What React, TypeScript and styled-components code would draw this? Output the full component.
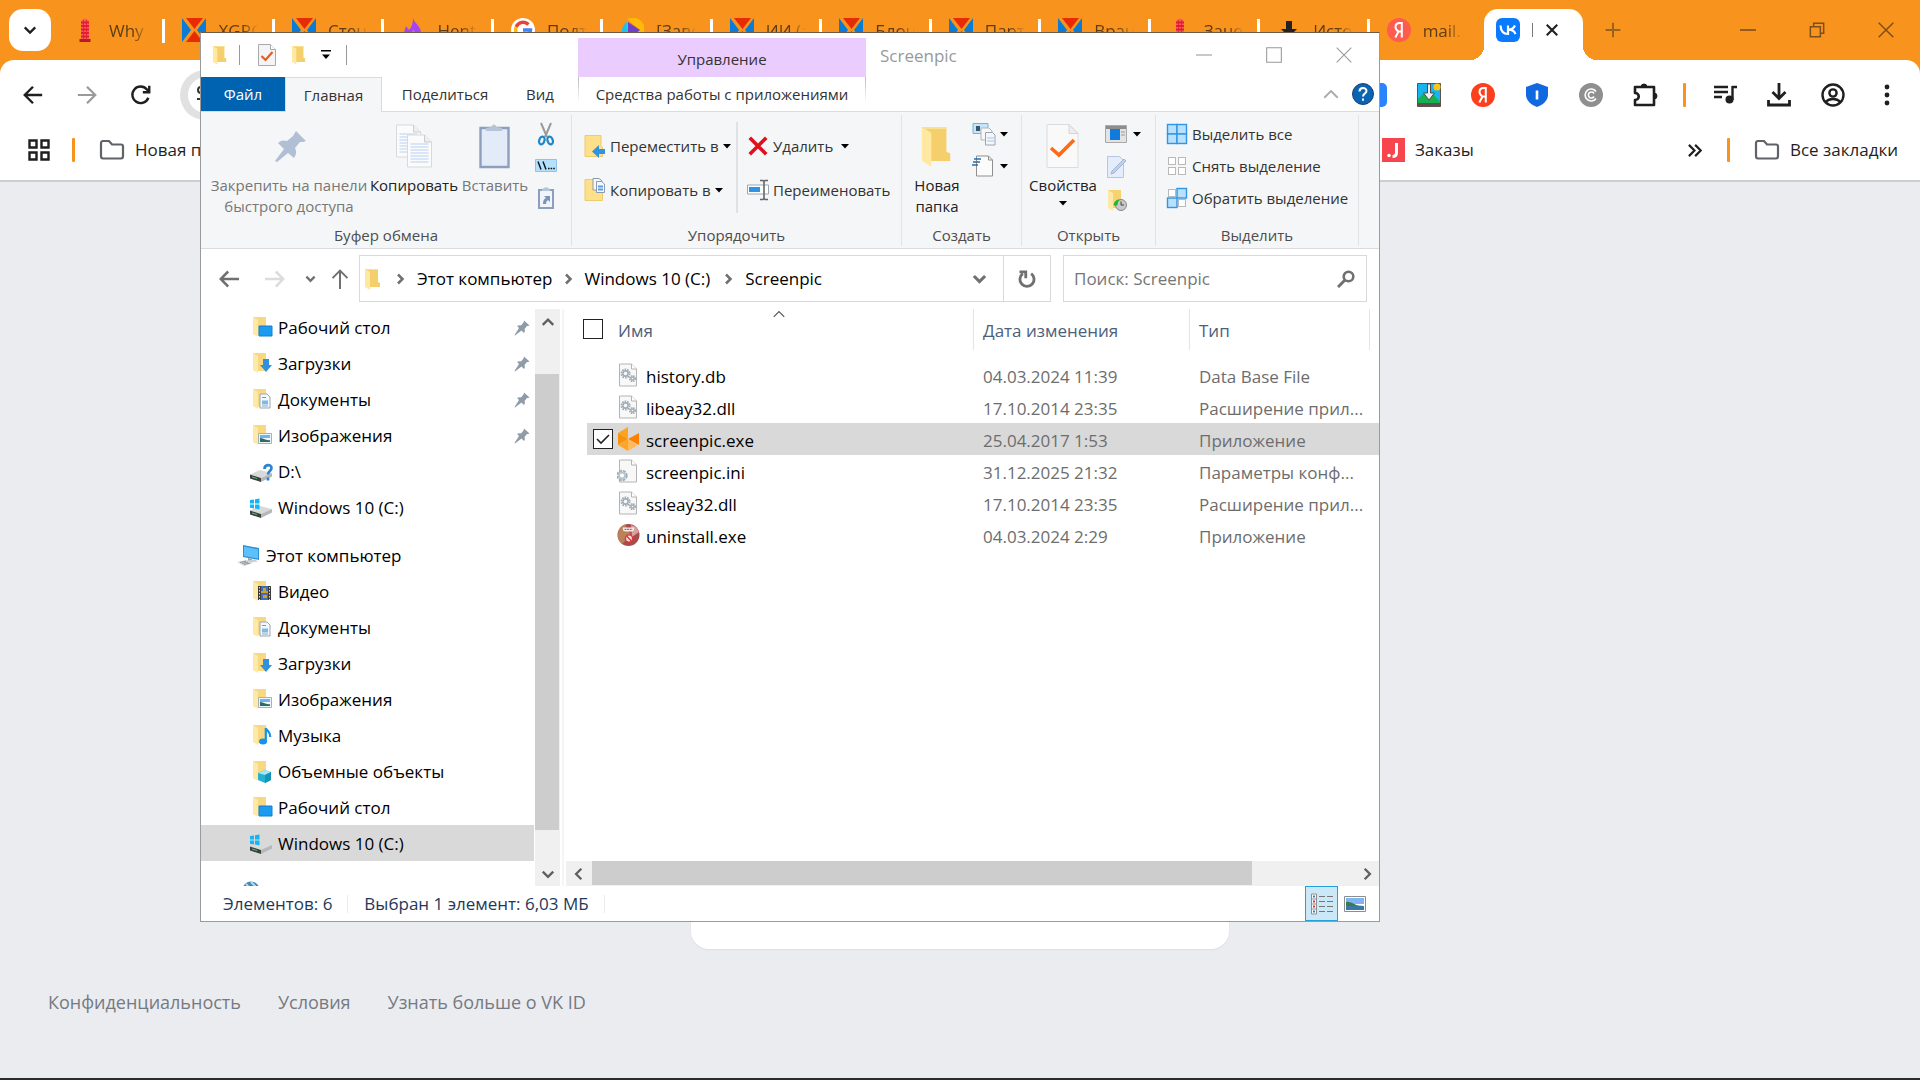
import React from "react";
import styled, { createGlobalStyle, css } from "styled-components";

const orange = "#f8931d";
const uiFont = `"Open Sans", "Noto Sans", sans-serif`;

const GlobalStyle = createGlobalStyle`
  * { box-sizing: border-box; }
  body { margin: 0; font-family: ${uiFont}; color: #1f1f1f; }
  button, input { font: inherit; color: inherit; }
  button { background: none; border: 0; padding: 0; margin: 0; }
  svg { display: block; flex: none; }
`;

/* ---------- browser ---------- */

const Page = styled.div`
  position: relative;
  display: flex;
  flex-direction: column;
  min-height: 100vh;
  background: #ebecf0;
  border-bottom: 2px solid #2b2b2b;
  overflow: hidden;
`;

const TabStrip = styled.header`
  display: flex;
  align-items: stretch;
  height: 60px;
  padding: 0 0 0 9px;
  background: ${orange};
`;

const TabSearch = styled.button`
  display: grid;
  place-items: center;
  align-self: center;
  width: 42px;
  height: 42px;
  border-radius: 14px;
  background: #fff;
`;

const Tabs = styled.nav`
  display: flex;
  flex: 1;
  margin-left: 5px;
`;

const Tab = styled.button<{ $last?: boolean }>`
  display: flex;
  align-items: center;
  gap: 12px;
  flex: 1 1 0;
  min-width: 0;
  height: 60px;
  padding-left: 17px;
  ${(p) =>
    !p.$last &&
    css`
      background: linear-gradient(#fff, #fff) right 19px / 3px 24px no-repeat;
    `}
`;

const TabTitle = styled.span`
  width: 40px;
  padding-top: 2px;
  overflow: hidden;
  white-space: nowrap;
  text-align: left;
  font-size: 17px;
  line-height: 24px;
  color: #5f3d14;
  mask-image: linear-gradient(to right, #000 60%, transparent);
`;

const ActiveTab = styled.button`
  display: flex;
  align-items: center;
  gap: 12px;
  position: relative;
  width: 99px;
  height: 51px;
  margin: 9px 12px 0 5px;
  padding: 0 14px 9px 12px;
  border-radius: 14px 14px 0 0;
  background: #fff;
  &::before,
  &::after {
    content: "";
    position: absolute;
    bottom: 0;
    width: 14px;
    height: 14px;
  }
  &::before {
    right: 100%;
    background: radial-gradient(circle at 0 0, transparent 14px, #fff 14px);
  }
  &::after {
    left: 100%;
    background: radial-gradient(circle at 100% 0, transparent 14px, #fff 14px);
  }
`;

const TabEdge = styled.span`
  width: 1px;
  height: 14px;
  background: #777;
`;

const NewTab = styled.button`
  display: grid;
  place-items: center;
  width: 36px;
`;

const WindowButtons = styled.div`
  display: flex;
  margin-left: 82px;
`;

const WindowButton = styled.button`
  display: grid;
  place-items: center;
  width: 69px;
`;

const ToolbarBack = styled.div`
  background: ${orange};
`;

const Toolbar = styled.div`
  display: flex;
  align-items: center;
  height: 69px;
  padding: 0 6px;
  background: #fff;
  border-radius: 14px 14px 0 0;
`;

const ToolButton = styled.button`
  display: grid;
  place-items: center;
  width: 54px;
  height: 50px;
`;

const Omnibox = styled.div`
  display: flex;
  align-items: center;
  flex: 1;
  height: 50px;
  margin-left: 12px;
  padding-left: 8px;
  border-radius: 25px;
  background: linear-gradient(to right, #e1e1e1 400px, #fff 400px);
`;

const SiteInfo = styled.button`
  display: grid;
  place-items: center;
  width: 36px;
  height: 36px;
  border-radius: 18px;
  background: #fff;
`;

const Divider = styled.span<{ $m: string }>`
  width: 3px;
  height: 24px;
  margin: ${(p) => p.$m};
  background: ${orange};
  border-radius: 1px;
`;

const Bookmarks = styled.nav`
  display: flex;
  align-items: center;
  height: 53px;
  padding: 0 22px 9px 27px;
  background: #fff;
  border-bottom: 2px solid #cdced2;
`;

const Bookmark = styled.a`
  display: flex;
  align-items: center;
  gap: 10px;
  font-size: 17px;
  line-height: 24px;
  color: #1f1f1f;
  text-decoration: none;
  white-space: nowrap;
`;

const Push = styled.span`
  flex: 1;
`;

const OrdersSlot = styled.div`
  width: 305px;
`;

const Main = styled.main`
  display: flex;
  flex: 1;
  justify-content: center;
  align-items: flex-end;
`;

const LoginCard = styled.section`
  width: 538px;
  height: 640px;
  border-radius: 18px;
  background: #fff;
  box-shadow: 0 1px 2px rgba(0, 0, 0, 0.06);
`;

const Footer = styled.footer`
  display: flex;
  gap: 37px;
  height: 129px;
  padding: 40px 48px 0;
  font-size: 18px;
  line-height: 26px;
  a {
    color: #747a83;
    text-decoration: none;
  }
`;

/* ---------- explorer window ---------- */

const Explorer = styled.section`
  position: absolute;
  left: 200px;
  top: 32px;
  display: flex;
  flex-direction: column;
  width: 1180px;
  height: 890px;
  border: 1px solid #9a9a9f;
  border-top-color: #6b5a45;
  background: #fff;
  color: #000;
`;

const TitleBar = styled.div`
  display: flex;
  height: 44px;
`;

const QuickAccess = styled.div`
  display: flex;
  align-items: center;
  width: 377px;
  padding: 0 0 0 11px;
`;

const QuickButton = styled.button<{ $w: number }>`
  display: grid;
  place-items: center;
  width: ${(p) => p.$w}px;
  height: 28px;
`;

const QuickLine = styled.span<{ $m: number }>`
  width: 1px;
  height: 20px;
  margin: 0 ${(p) => p.$m}px;
  background: #999;
`;

const ContextTitle = styled.div`
  width: 288px;
  margin-top: 5px;
  background: #eaccff;
  text-align: center;
  font-size: 15px;
  line-height: 42px;
  color: #333;
`;

const WindowTitle = styled.h1`
  flex: 1;
  margin: 0;
  padding-left: 14px;
  font-size: 17px;
  font-weight: 400;
  line-height: 46px;
  color: #999;
`;

const CaptionButton = styled.button`
  display: grid;
  place-items: center;
  width: 70px;
  height: 43px;
`;

const RibbonTabs = styled.div`
  display: flex;
  height: 35px;
  border-bottom: 1px solid #dadbdc;
  font-size: 15px;
  line-height: 34px;
`;

const RibbonTab = styled.button<{ $w: number; $kind?: "file" | "active" }>`
  width: ${(p) => p.$w}px;
  height: 34px;
  color: #333;
  ${(p) =>
    p.$kind === "file" &&
    css`
      background: #0063b1;
      color: #fff;
    `}
  ${(p) =>
    p.$kind === "active" &&
    css`
      height: 35px;
      padding-bottom: 2px;
      background: #f5f6f7;
      border: 1px solid #dadbdc;
      border-bottom: 0;
    `}
`;

const ContextTab = styled.button`
  width: 288px;
  margin-left: 6px;
  color: #333;
  background:
    linear-gradient(#bbb, #fff) left top / 1px 26px no-repeat,
    linear-gradient(#bbb, #fff) right top / 1px 26px no-repeat;
`;

const RibbonTools = styled.div`
  display: flex;
  align-items: center;
  gap: 12px;
  margin-left: auto;
  padding-right: 5px;
`;

const Ribbon = styled.div`
  display: grid;
  grid-template-columns: 371px 330px 120px 134px 203px 1fr;
  height: 137px;
  padding: 3px 0 2px;
  background: #f5f6f7;
  border-bottom: 1px solid #dadbdc;
  font-size: 15px;
  line-height: 21px;
  color: #333;
`;

const Group = styled.section`
  display: flex;
  flex-direction: column;
  border-right: 1px solid #e2e3e4;
`;

const GroupBody = styled.div<{ $left?: number }>`
  display: flex;
  flex: 1;
  padding-left: ${(p) => p.$left || 0}px;
`;

const GroupName = styled.h2`
  margin: 0;
  font-size: 15px;
  font-weight: 400;
  line-height: 22px;
  text-align: center;
  color: #4d4d4d;
`;

const BigButton = styled.button<{ $w: number; $muted?: boolean }>`
  display: flex;
  flex-direction: column;
  align-items: center;
  gap: 5px;
  width: ${(p) => p.$w}px;
  height: 102px;
  padding-top: 7px;
  line-height: 21px;
  white-space: pre-line;
  color: ${(p) => (p.$muted ? "#777" : "#222")};
  > svg:first-child {
    height: 48px;
  }
`;

const Stack = styled.div<{ $top: number; $left?: number; $w?: number }>`
  display: flex;
  flex-direction: column;
  align-items: flex-start;
  width: ${(p) => (p.$w ? `${p.$w}px` : "auto")};
  padding: ${(p) => p.$top}px 0 0 ${(p) => p.$left || 0}px;
`;

const SmallButton = styled.button<{ $h: number }>`
  display: flex;
  align-items: center;
  gap: 4px;
  height: ${(p) => p.$h}px;
  white-space: nowrap;
`;

const InnerLine = styled.span`
  width: 2px;
  height: 91px;
  margin: 7px 0 0;
  background: #e0e1e3;
`;

const AddressRow = styled.div`
  display: flex;
  align-items: center;
  height: 60px;
  padding: 0 12px 1px;
`;

const NavButton = styled.button<{ $w: number; $left?: number }>`
  display: grid;
  place-items: center;
  width: ${(p) => p.$w}px;
  height: 36px;
  padding-left: ${(p) => p.$left || 0}px;
`;

const AddressBox = styled.div`
  display: flex;
  align-items: center;
  flex: 1;
  height: 47px;
  padding-left: 4px;
  border: 1px solid #d9d9d9;
  font-size: 17px;
`;

const Crumb = styled.button`
  height: 36px;
`;

const CrumbArrow = styled.span<{ $m: string }>`
  margin: ${(p) => p.$m};
`;

const AddressButton = styled.button<{ $line?: boolean }>`
  display: grid;
  place-items: center;
  width: 47px;
  height: 45px;
  border-left: ${(p) => (p.$line ? "1px solid #d9d9d9" : "0")};
`;

const SearchBox = styled.label`
  display: flex;
  align-items: center;
  width: 304px;
  height: 47px;
  margin-left: 12px;
  padding: 0 11px 0 10px;
  border: 1px solid #d9d9d9;
`;

const SearchInput = styled.input`
  flex: 1;
  min-width: 0;
  border: 0;
  outline: 0;
  padding: 0;
  font-size: 17px;
  background: none;
  &::placeholder {
    color: #767676;
    opacity: 1;
  }
`;

const Panes = styled.div`
  display: flex;
  flex: 1;
  min-height: 0;
`;

const NavPane = styled.nav`
  width: 333px;
  overflow: hidden;
`;

const NavItem = styled.a<{ $level: number; $selected?: boolean; $gap?: boolean }>`
  display: flex;
  align-items: center;
  gap: 5px;
  height: 36px;
  margin-top: ${(p) => (p.$gap ? 12 : 0)}px;
  padding: 2px 4px 0 ${(p) => (p.$level ? 48 : 36)}px;
  background: ${(p) => (p.$selected ? "#d9d9d9" : "transparent")};
  color: #000;
  text-decoration: none;
  font-size: 17px;
  line-height: 24px;
  white-space: nowrap;
`;

const ItemText = styled.span`
  flex: 1;
`;

const VScroll = styled.div`
  display: flex;
  flex-direction: column;
  align-items: center;
  width: 25px;
  margin-left: 1px;
  background: #f0f0f0;
`;

const VThumb = styled.div`
  width: 24px;
  height: 456px;
  margin: 40px 1px 31px 0;
  background: #cdcdcd;
`;

const ScrollButton = styled.button`
  display: grid;
  place-items: center;
  width: 25px;
  height: 25px;
`;

const FilePane = styled.div`
  display: flex;
  flex: 1;
  flex-direction: column;
  min-width: 0;
  margin-left: 2px;
  border-left: 2px solid #f5f5f5;
`;

const FileArea = styled.div`
  flex: 1;
  padding-left: 19px;
`;

const FileTable = styled.table`
  width: 100%;
  border-collapse: collapse;
  table-layout: fixed;
  font-size: 17px;
  line-height: 24px;
`;

const HeadCell = styled.th`
  position: relative;
  height: 50px;
  padding: 0;
  font-weight: 400;
  text-align: left;
  vertical-align: top;
  color: #4c607a;
`;

const HeadLabel = styled.div<{ $pad: number; $line?: boolean }>`
  height: 41px;
  padding: 10px 0 0 ${(p) => p.$pad}px;
  border-right: ${(p) => (p.$line ? "1px solid #e5e5e5" : "0")};
`;

const SortMark = styled.span`
  position: absolute;
  left: 50%;
  top: -2px;
  margin-left: -24px;
`;

const Check = styled.input`
  display: block;
  appearance: none;
  width: 20px;
  height: 20px;
  margin: 0;
  border: 1px solid #222;
  background: #fff;
  &:checked {
    background: #fff
      url("data:image/svg+xml,%3Csvg xmlns='http://www.w3.org/2000/svg' viewBox='0 0 18 18'%3E%3Cpath d='M3 9l4 4 8-8' fill='none' stroke='%23222' stroke-width='1.6'/%3E%3C/svg%3E");
  }
`;

const FileRow = styled.tr<{ $selected?: boolean }>`
  height: 32px;
  background: ${(p) => (p.$selected ? "#d9d9d9" : "transparent")};
`;

const Cell = styled.td<{ $dim?: boolean; $check?: boolean }>`
  padding: ${(p) => (p.$check ? "0 0 0 10px" : p.$dim ? "4px 0 0 9px" : "4px 0 0")};
  color: ${(p) => (p.$dim ? "#6d6d6d" : "#000")};
  overflow: hidden;
  white-space: nowrap;
  background: ${(p) => (p.$check ? "linear-gradient(#fff, #fff) left / 4px 100% no-repeat" : "none")};
`;

const FileName = styled.span`
  display: flex;
  align-items: center;
  gap: 5px;
  svg {
    margin-top: -4px;
  }
`;

const HScroll = styled.div`
  display: flex;
  height: 25px;
  margin-left: 2px;
  background: #f0f0f0;
`;

const HThumb = styled.div`
  flex: 1;
  height: 24px;
  margin: 0 102px 0 1px;
  background: #cdcdcd;
`;

const StatusBar = styled.footer`
  display: flex;
  align-items: center;
  height: 35px;
  padding: 0 8px 0 22px;
  font-size: 17px;
  line-height: 24px;
  color: #1e395b;
`;

const StatusLine = styled.span<{ $l: number }>`
  width: 1px;
  height: 18px;
  margin: 0 16px 0 ${(p) => p.$l}px;
  background: #ececec;
`;

const ViewButton = styled.button<{ $on?: boolean }>`
  display: grid;
  place-items: center;
  width: 33px;
  height: 35px;
  border: ${(p) => (p.$on ? "1px solid #26a0da" : "0")};
  background: ${(p) => (p.$on ? "#cbe8f6" : "none")};
`;

/* ---------- icons ---------- */

type P = { d: string; s?: number; c?: string; w?: number };
const Line = ({ d, s = 24, c = "#1f1f1f", w = 2.4 }: P) => (
  <svg width={s} height={s} viewBox="0 0 24 24" fill="none" stroke={c} strokeWidth={w}>
    <path d={d} />
  </svg>
);

const Favicon = ({ kind }: { kind: string }) => (
  <svg width="24" height="24" viewBox="0 0 24 24">
    {kind === "tower" && (
      <g>
        <path d="M8 22V3q4-5 8 0v19z" fill="#ff5a5f" />
        <path d="M6.500 21h11v3h-11z" fill="#b51a2a" />
        <path d="M8 4.500h8M8 8h8M8 11.500h8M8 15h8M8 18.500h8" stroke="#e0202f" strokeWidth="1.800" />
        <path d="M10.500 2v20M13.500 2v20" stroke="#e0202f" strokeWidth=".8" />
      </g>
    )}
    {kind === "x" && (
      <g>
        <path d="M0 0l9 12-9 12zM24 0l-9 12 9 12z" fill="#0a7cd8" />
        <path d="M4 0h17l-8.500 11z" fill="#e62b05" />
        <path d="M4 24h17l-8.500-11z" fill="#e62b05" />
      </g>
    )}
    {kind === "flame" && (
      <g>
        <path d="M12 0c1 5 8 8 8 15a8.500 8.500 0 0 1-17 1c0-3 1-5 2-8l3 4c3-3 4-7 4-12z" fill="#a445f5" />
        <path d="M12 11c3 4 4 6 4 9a4 4 0 0 1-8 0c0-3 3-5 4-9z" fill="#d05cf0" />
      </g>
    )}
    {kind === "google" && (
      <g>
        <circle cx="12" cy="12" r="12" fill="#fff" />
        <g fill="none" strokeWidth="3.400">
          <path d="M17.500 6.500A7.500 7.500 0 0 0 5.200 9" stroke="#ea4335" />
          <path d="M5.200 9a7.500 7.500 0 0 0 0 6" stroke="#fbbc05" />
          <path d="M5.200 15a7.500 7.500 0 0 0 12 2.500" stroke="#34a853" />
          <path d="M17.200 17.500a7.500 7.500 0 0 0 2.300-5.500H12" stroke="#4285f4" />
        </g>
      </g>
    )}
    {kind === "play" && (
      <g>
        <path d="M7 1a12 12 0 1 1 2 22L20 12z" fill="#fdbb08" />
        <path d="M7 4A12 12 0 0 0 4 21l4 0z" fill="#19c3ee" />
        <path d="M8 4l12 8-12 10z" fill="#7040c4" />
      </g>
    )}
    {kind === "down" && <path d="M9 3h6v8h5l-8 8-8-8h5z" fill="#222" />}
    {kind === "ya" && <YaShape c="#ff5c4d" />}
  </svg>
);

const YaShape = ({ c }: { c: string }) => (
  <g>
    <circle cx="12" cy="12" r="12" fill={c} />
    <path
      d="M14.800 19.500V5h-2c-2.700 0-4.300 1.600-4.300 4 0 2.200 1.200 3.300 3 4.500L8.300 19.500M14.800 13.500h-2.500"
      fill="none"
      stroke="#fff"
      strokeWidth="2"
    />
  </g>
);

const VkIcon = () => (
  <svg width="24" height="24" viewBox="0 0 24 24">
    <rect width="24" height="24" rx="6" fill="#0a7aff" />
    <path
      d="M4.500 7.500c.3 5 2.600 8.500 7.500 8.500V7.500M19 7.500c-1.200 2.500-3.500 4.200-6.500 4.200 3.500 0 6 1.500 7 4.500"
      fill="none"
      stroke="#fff"
      strokeWidth="2.200"
    />
  </svg>
);

const Folder = ({ w = 18, h = 22 }: { w?: number; h?: number }) => (
  <svg width={w} height={h} viewBox="0 0 18 22">
    <path d="M1 1h13v13l2 1v4H2z" fill="#f5cf6b" />
    <path d="M1 1h13l0 1H3z" fill="#fbe08f" />
    <path d="M1 1l5 3v18l-5-3z" fill="#ffe9a2" />
  </svg>
);

const BookmarkFolder = () => (
  <svg width="26" height="24" viewBox="0 0 26 24" fill="none" stroke="#5f6368" strokeWidth="2.200">
    <path d="M2 5.500Q2 3 4 3h6l3 3.500h9q2 0 2 2V18q0 2.500-2 2.500H4Q2 20.500 2 18z" />
  </svg>
);

const Caret = () => (
  <svg width="8" height="5" viewBox="0 0 8 5">
    <path d="M0 0h8L4 4.500z" fill="#000" />
  </svg>
);

const Pin = ({ s, c }: { s: number; c: string }) => (
  <svg width={s} height={s} viewBox="0 0 32 32">
    <path d="M20 1l11 10-3 1-2 0-5 6c1 3 1 5-1 8l-5-5L2 31l-1-1L10 16 6 12c3-2 6-2 8-1l5-6z" fill={c} />
  </svg>
);

const Sheet = ({ children }: { children?: React.ReactNode }) => (
  <svg width="24" height="24" viewBox="0 0 24 24">
    <path d="M2.500 1h12l5 5v17h-17z" fill="#f8f8f8" stroke="#b4b4b4" />
    <path d="M14.500 1v5h5" fill="#fff" stroke="#b4b4b4" />
    {children}
  </svg>
);

const FileIcon = ({ kind }: { kind: string }) => {
  if (kind === "dll")
    return (
      <Sheet>
        <g fill="none" stroke="#a3b0b9">
          <circle cx="8.500" cy="10.500" r="4" strokeWidth="2.200" strokeDasharray="1.600 .9" />
          <circle cx="8.500" cy="10.500" r="2.600" strokeWidth="1.600" />
          <circle cx="15.500" cy="15.500" r="2.600" strokeWidth="2" strokeDasharray="1.400 .7" />
          <circle cx="15.500" cy="15.500" r="1.500" strokeWidth="1.400" />
        </g>
      </Sheet>
    );
  if (kind === "ini")
    return (
      <Sheet>
        <circle cx="5" cy="16.500" r="4" fill="none" stroke="#9fb0bb" strokeWidth="3.400" strokeDasharray="2.400 .8" />
        <circle cx="5" cy="16.500" r="3" fill="#fff" stroke="#b9c6ce" strokeWidth="2" />
      </Sheet>
    );
  if (kind === "app")
    return (
      <svg width="24" height="24" viewBox="0 0 24 24">
        <path d="M11 0v12L1 6z" fill="#ffa31f" />
        <path d="M1 6l10 6-10 6z" fill="#f5930f" />
        <path d="M11 12v12L1 18z" fill="#ffa629" />
        <path d="M11 12l11-6v12z" fill="#ff7f00" />
        <path d="M11 12l10 6-10 6z" fill="#ffbc5c" />
      </svg>
    );
  return (
    <svg width="24" height="24" viewBox="0 0 24 24">
      <circle cx="11.500" cy="12" r="11" fill="#a94a4c" />
      <path d="M1 12a11 11 0 0 1 7-10.500L14 12l-9 9A11 11 0 0 1 1 12z" fill="#b98258" />
      <path d="M14 2a11 11 0 0 1 8 7l-7 5z" fill="#d9a0a0" />
      <path d="M5.500 4.500h12l-1 3.500q-5 1-10 0z" fill="#f7ecec" />
      <path d="M7.500 6.300h8" stroke="#c33" strokeDasharray="2 .6" />
      <circle cx="12" cy="15.500" r="3.600" fill="#f8dede" stroke="#d8383c" strokeWidth="1.400" />
      <path d="M9.500 13l5 5" stroke="#d8383c" strokeWidth="1.400" />
    </svg>
  );
};

const NavIcon = ({ kind }: { kind: string }) => {
  if (kind === "pc")
    return (
      <svg width="24" height="24" viewBox="0 0 24 24">
        <path d="M6 1l16 3v12L6 13z" fill="#2f8fd0" />
        <path d="M7 2.500l14 3v9L7 12z" fill="#5cc0fb" />
        <path d="M11 14l4 1v3l-4-1z" fill="#9aa3a8" />
        <path d="M9 16.500l9-1 3 2-8 1z" fill="#c9ced2" />
        <path d="M0 18l9-2 7 3-9 3z" fill="#d4d9dc" />
        <path d="M3 18.500l6-1.400M5 19.500l6-1.400M7 20.500l6-1.400" stroke="#8f989d" />
      </svg>
    );
  if (kind === "net")
    return (
      <svg width="24" height="24" viewBox="0 0 24 24">
        <circle cx="14" cy="10" r="8.500" fill="#3d8fb8" />
        <path d="M9 4c3 2 3 6 0 9M14 2c3 3 5 4 6 8" stroke="#b8dcec" strokeWidth="2" fill="none" />
      </svg>
    );
  if (kind === "drive" || kind === "unknown")
    return (
      <svg width="24" height="24" viewBox="0 0 24 24">
        <path d="M1 14.500l10-4.500 12 3-11 5z" fill="#d9d9da" />
        <path d="M1 14.500l11 3.500v4L1 18.500z" fill="#3d403f" />
        <path d="M12 18l11-5v3.500L12 22z" fill="#b6b7b9" />
        <path d="M3 17l5 1.500" stroke="#46c46c" />
        {kind === "drive" ? (
          <path d="M1 4l4-.6v4H1zM6 3.200l4.500-.7v4.900H6zM1 8.400h4v4l-4-.6zM6 8.400h4.500v4.900L6 12.600z" fill="#12b6f2" />
        ) : (
          <path d="M15.500 9c0-5 7-5 7-1 0 3-3.500 3-3.500 6.500M19 17.500v3" stroke="#2b84d0" strokeWidth="2.700" fill="none" />
        )}
      </svg>
    );
  return (
    <svg width="24" height="24" viewBox="0 0 24 24">
      <path d="M4 1h13v18H5z" fill="#f8d981" />
      <path d="M4 1l5 3v17l-5-3z" fill="#ffe9a8" />
      {kind === "desktop" && <path d="M10 10h13v10H10z" fill="#1c9bf2" stroke="#1380cc" />}
      {kind === "downloads" && <path d="M14 7h6v6h3l-6 7-6-7h3z" fill="#2f8fe0" />}
      {kind === "docs" && (
        <g>
          <path d="M11 6h7l3 3v11H11z" fill="#f4f8fb" stroke="#9aa7b2" />
          <path d="M13 9.500h4" stroke="#5aa4d6" />
          <path d="M13 12.500h6v4h-6z" fill="#7dbbe4" />
          <path d="M13 18h6" stroke="#8fa6b5" />
        </g>
      )}
      {kind === "pics" && (
        <g>
          <path d="M9.500 9.500h13v10h-13z" fill="#eef6fb" stroke="#a7b0b8" />
          <path d="M11 11h10v3H11z" fill="#6cb6ec" />
          <path d="M11 14c3 0 6 3 10 2v2H11z" fill="#2f6b62" />
        </g>
      )}
      {kind === "video" && (
        <g>
          <path d="M9 6h13v14H9z" fill="#3b3b3b" />
          <path d="M12 6h7v14h-7z" fill="#3a6fc0" />
          <path d="M12 11h7v2h-7zM14 8h3v3h-3zM14 15h4v3h-4z" fill="#d79b2a" />
          <path d="M10.500 7v13M20.500 7v13" stroke="#ddd" strokeDasharray="1.500 1.500" />
        </g>
      )}
      {kind === "music" && (
        <g>
          <ellipse cx="14" cy="17.500" rx="4" ry="3" fill="#1592ea" />
          <path d="M16.800 17.500V4c1 3 5 4 4.500 9" stroke="#1592ea" strokeWidth="2.200" fill="none" />
        </g>
      )}
      {kind === "cube" && (
        <g>
          <path d="M9 13l7-3 6 2v8l-6 3-7-3z" fill="#25b0d0" />
          <path d="M9 13l7-3 6 2-6 3z" fill="#a5e6f2" />
          <path d="M16 15l6-3v8l-6 3z" fill="#1593b8" />
        </g>
      )}
    </svg>
  );
};

const CopyBig = () => (
  <svg width="36" height="48" viewBox="0 0 36 48">
    {[
      [0.5, 3],
      [11.5, 13],
    ].map(([x, y]) => (
      <g key={x} transform={`translate(${x} ${y})`}>
        <path d="M0 0h17l7 7v25H0z" fill="#fbfbfc" stroke="#d9d9d9" />
        <path d="M17 0v7h7" fill="#eee" stroke="#ccc" />
        <path d="M3 9h18M3 12h18M3 15h18M3 18h18M3 21h18M3 24h18M3 27h18" stroke="#cfe0f6" strokeWidth="1.600" />
      </g>
    ))}
  </svg>
);

const PasteBig = () => (
  <svg width="32" height="48" viewBox="0 0 32 48">
    <path d="M1.500 6h28v39h-28z" fill="#e3ebf8" stroke="#8e9fbd" strokeWidth="2.400" />
    <path d="M7 9V6l5-1q3-5 6 0l5 1v3z" fill="#b6c4d8" />
  </svg>
);

const PropsBig = () => (
  <svg width="34" height="48" viewBox="0 0 34 48">
    <path d="M1 2.500h22l9 9v34H1z" fill="#f9f9f9" stroke="#dcdcdc" />
    <path d="M23 2.500v9h9z" fill="#eee" stroke="#d5d5d5" />
    <path d="M5 26l8 7 15-15" fill="none" stroke="#ff6a13" strokeWidth="3.600" />
  </svg>
);

const FolderWith = ({ kind }: { kind: "move" | "copy" }) => (
  <svg width="22" height="24" viewBox="0 0 22 24">
    <path d="M1 1.500h16V12l1.500 1v9.500H1z" fill="#ffe08a" stroke="#eccd6c" />
    {kind === "move" ? (
      <path d="M21 15h-6v-4l-7 6.500 7 6.500v-4h6z" fill="#3093e6" />
    ) : (
      <g stroke="#8a9bb0" fill="#f4f8fd">
        <path d="M9 .5h6l3 2.500v9H9z" />
        <path d="M12.500 3.500h5l3 2.500v8.500h-8z" />
        <path d="M14 8.500h5M14 11.500h5" stroke="#5b9be8" strokeWidth="1.800" />
      </g>
    )}
  </svg>
);

const SelectIcon = ({ on }: { on: boolean[] }) => (
  <svg width="22" height="22" viewBox="0 0 22 22">
    {on.map((v, i) => (
      <rect
        key={i}
        x={i % 2 ? (v ? 11 : 12.5) : v ? 1.5 : 2.5}
        y={i > 1 ? (v ? 11 : 12.5) : v ? 1.5 : 2.5}
        width={v ? 9.5 : 7}
        height={v ? 9.5 : 7}
        fill={v ? "#b9e0fd" : "#fff"}
        stroke={v ? "#2f96e6" : "#b9b9b9"}
        strokeWidth={v ? 1.4 : 1}
      />
    ))}
  </svg>
);

const up = "M3 17l9-9 9 9";
const down = "M3 8l9 9 9-9";
const left = "M16 3l-9 9 9 9";
const right = "M8 3l9 9-9 9";

/* ---------- data ---------- */

const tabs = [
  ["tower", "Why Do"],
  ["x", "XGROVE"],
  ["x", "Стенды"],
  ["flame", "Hentai"],
  ["google", "Подтве"],
  ["play", "[Завод"],
  ["x", "ИИ (ан"],
  ["x", "Блоче"],
  ["x", "Парти"],
  ["x", "Врачи"],
  ["tower", "Зачем"],
  ["down", "Истор"],
  ["ya", "mail.ru"],
];

type Item = { icon: string; text: string; level: number; pin?: boolean; selected?: boolean; gap?: boolean };
const navItems: Item[] = [
  { icon: "desktop", text: "Рабочий стол", level: 1, pin: true },
  { icon: "downloads", text: "Загрузки", level: 1, pin: true },
  { icon: "docs", text: "Документы", level: 1, pin: true },
  { icon: "pics", text: "Изображения", level: 1, pin: true },
  { icon: "unknown", text: "D:\\", level: 1 },
  { icon: "drive", text: "Windows 10 (C:)", level: 1 },
  { icon: "pc", text: "Этот компьютер", level: 0, gap: true },
  { icon: "video", text: "Видео", level: 1 },
  { icon: "docs", text: "Документы", level: 1 },
  { icon: "downloads", text: "Загрузки", level: 1 },
  { icon: "pics", text: "Изображения", level: 1 },
  { icon: "music", text: "Музыка", level: 1 },
  { icon: "cube", text: "Объемные объекты", level: 1 },
  { icon: "desktop", text: "Рабочий стол", level: 1 },
  { icon: "drive", text: "Windows 10 (C:)", level: 1, selected: true },
  { icon: "net", text: "Сеть", level: 0, gap: true },
];

const files = [
  ["dll", "history.db", "04.03.2024 11:39", "Data Base File"],
  ["dll", "libeay32.dll", "17.10.2014 23:35", "Расширение прил..."],
  ["app", "screenpic.exe", "25.04.2017 1:53", "Приложение"],
  ["ini", "screenpic.ini", "31.12.2025 21:32", "Параметры конф..."],
  ["dll", "ssleay32.dll", "17.10.2014 23:35", "Расширение прил..."],
  ["un", "uninstall.exe", "04.03.2024 2:29", "Приложение"],
];

/* ---------- parts ---------- */

const BrowserChrome = () => (
  <>
    <TabStrip>
      <TabSearch aria-label="Поиск вкладок">
        <Line d="M5 8.500l7 7 7-7" s={18} w={3} />
      </TabSearch>
      <Tabs>
        {tabs.map(([icon, text], i) => (
          <Tab key={i} $last={i === tabs.length - 1}>
            <Favicon kind={icon} />
            <TabTitle>{text}</TabTitle>
          </Tab>
        ))}
      </Tabs>
      <ActiveTab aria-label="VK ID">
        <VkIcon />
        <TabEdge />
        <Line d="M3 3l18 18M21 3L3 21" s={14} w={3.6} />
      </ActiveTab>
      <NewTab aria-label="Новая вкладка">
        <Line d="M12 1v22M1 12h22" s={16} c="#99621f" w={3} />
      </NewTab>
      <WindowButtons>
        <WindowButton aria-label="Свернуть">
          <Line d="M0 12h24" s={16} c="#7a4f1c" w={2.4} />
        </WindowButton>
        <WindowButton aria-label="Восстановить">
          <Line d="M2 7h15v15H2zM7 7V2h15v15h-5" s={16} c="#7a4f1c" w={2.2} />
        </WindowButton>
        <WindowButton aria-label="Закрыть">
          <Line d="M1 1l22 22M23 1L1 23" s={16} c="#7a4f1c" w={2.2} />
        </WindowButton>
      </WindowButtons>
    </TabStrip>
    <ToolbarBack>
      <Toolbar>
        <ToolButton aria-label="Назад">
          <Line d="M12 3l-9 9 9 9M3 12h19" s={22} w={2.6} />
        </ToolButton>
        <ToolButton aria-label="Вперёд">
          <Line d="M12 3l9 9-9 9M21 12H2" s={22} c="#9a9a9a" w={2.4} />
        </ToolButton>
        <ToolButton aria-label="Обновить">
          <Line d="M20 15a9 9 0 1 1-1.500-9l2.500 3M21 2v7h-7" s={22} w={2.6} />
        </ToolButton>
        <Omnibox>
          <SiteInfo aria-label="Сведения о сайте">
            <svg width="20" height="20" viewBox="0 0 20 20" fill="none" stroke="#333" strokeWidth="2">
              <circle cx="5" cy="5" r="3" />
              <path d="M10 5h9M1 14h9" />
              <circle cx="14" cy="14" r="3" />
            </svg>
          </SiteInfo>
        </Omnibox>
        <ToolButton aria-label="Расширение">
          <svg width="24" height="24" viewBox="0 0 24 24">
            <rect width="24" height="24" rx="5" fill="#2b84ff" />
          </svg>
        </ToolButton>
        <ToolButton aria-label="Скачать изображения">
          <svg width="24" height="24" viewBox="0 0 24 24">
            <path d="M.5.5h23v23H.5z" fill="#19b4ee" stroke="#5d5348" />
            <circle cx="20" cy="4" r="3.500" fill="#f9c613" />
            <path d="M1 21v-5l6-6 5 5 4-4 7 8v2z" fill="#16b04e" />
            <path d="M1 20h22v3H1z" fill="#5d4f54" />
            <path d="M10.500 1h3v9h4L12 17l-5.500-7h4z" fill="#eee" stroke="#4b4b4b" />
          </svg>
        </ToolButton>
        <ToolButton aria-label="Яндекс">
          <svg width="24" height="24" viewBox="0 0 24 24">
            <YaShape c="#fc3f1d" />
          </svg>
        </ToolButton>
        <ToolButton aria-label="Защита">
          <svg width="24" height="24" viewBox="0 0 24 24">
            <path d="M12 0l11 4v8c0 5-5 10-11 12C6 22 1 17 1 12V4z" fill="#1268e0" />
            <path d="M12 7.500v9" stroke="#fff" strokeWidth="2.600" />
          </svg>
        </ToolButton>
        <ToolButton aria-label="Копирайт">
          <svg width="24" height="24" viewBox="0 0 24 24">
            <circle cx="12" cy="12" r="12" fill="#8f8f8f" />
            <path d="M17 8.500a6 6 0 1 0 0 7M15 10.500a3 3 0 1 0 0 3" fill="none" stroke="#fff" strokeWidth="1.600" />
          </svg>
        </ToolButton>
        <ToolButton aria-label="Расширения">
          <svg width="26" height="26" viewBox="0 0 26 26">
            <path d="M3 5h19v18H3v-5c5 0 5-7 0-7z" fill="none" stroke="#1f1f1f" strokeWidth="2.600" strokeLinejoin="round" />
            <path d="M9 5a3 3 0 0 1 6 0zM22 11a3 3 0 0 1 0 6z" fill="#1f1f1f" stroke="#1f1f1f" />
          </svg>
        </ToolButton>
        <Divider $m="0 12px 0 11px" />
        <ToolButton aria-label="Мультимедиа">
          <svg width="24" height="24" viewBox="0 0 24 24">
            <path d="M1 4h14M1 9h14M1 14h8M19 4h5M19.500 3v14" stroke="#1f1f1f" strokeWidth="2.400" />
            <circle cx="16.500" cy="16.500" r="4" fill="#1f1f1f" />
          </svg>
        </ToolButton>
        <ToolButton aria-label="Загрузки">
          <Line d="M12 0v15M5.500 9l6.500 6.500L18.500 9M1.500 17v5h21v-5" s={24} w={2.800} />
        </ToolButton>
        <ToolButton aria-label="Профиль">
          <svg width="24" height="24" viewBox="0 0 24 24" fill="none" stroke="#1f1f1f" strokeWidth="2.400">
            <circle cx="12" cy="12" r="10.500" />
            <circle cx="12" cy="10" r="3.600" />
            <path d="M4.500 19c4-4 11-4 15 0" />
          </svg>
        </ToolButton>
        <ToolButton aria-label="Меню">
          <svg width="24" height="24" viewBox="0 0 24 24" fill="#1f1f1f">
            <circle cx="12" cy="4" r="2.400" />
            <circle cx="12" cy="12" r="2.400" />
            <circle cx="12" cy="20" r="2.400" />
          </svg>
        </ToolButton>
      </Toolbar>
    </ToolbarBack>
    <Bookmarks>
      <svg width="24" height="24" viewBox="0 0 24 24" fill="none" stroke="#1f1f1f" strokeWidth="2.400">
        <path d="M2.500 2.500h7v7h-7zM14.500 2.500h7v7h-7zM2.500 14.500h7v7h-7zM14.500 14.500h7v7h-7z" />
      </svg>
      <Divider $m="0 24px 0 21px" />
      <Bookmark href="#folder">
        <BookmarkFolder />
        Новая папка
      </Bookmark>
      <Push />
      <OrdersSlot>
        <Bookmark href="#orders">
          <svg width="23" height="24" viewBox="0 0 23 24">
            <path d="M0 0h23v24H0z" fill="#f8444c" />
            <path d="M14.500 5v9.500q0 4-4 4" fill="none" stroke="#fff" strokeWidth="3" />
            <circle cx="7" cy="17.500" r="1.800" fill="#fff" />
          </svg>
          Заказы
        </Bookmark>
      </OrdersSlot>
      <Line d="M3 3l9 9-9 9M13 3l9 9-9 9" s={15} w={3.4} />
      <Divider $m="0 24px 0 25px" />
      <Bookmark href="#all">
        <BookmarkFolder />
        Все закладки
      </Bookmark>
    </Bookmarks>
  </>
);

const RibbonPanel = () => (
  <Ribbon>
    <Group>
      <GroupBody $left={8}>
        <BigButton $w={160} $muted>
          <svg width="34" height="48" viewBox="0 0 34 48">
            <path d="M24 9l10 10-3 1-3 0-5 6c2 4 1 7-1 10l-6-5L5 40l-2-1 9-12-6-6c3-3 6-3 9-2l6-5z" fill="#b0bfd4" />
          </svg>
          {"Закрепить на панели\nбыстрого доступа"}
        </BigButton>
        <BigButton $w={90}>
          <CopyBig />
          Копировать
        </BigButton>
        <BigButton $w={72} $muted>
          <PasteBig />
          Вставить
        </BigButton>
        <Stack $top={3} $left={4}>
          <SmallButton $h={32} aria-label="Вырезать">
            <svg width="22" height="24" viewBox="0 0 22 24" fill="none">
              <path d="M6 1l6 14M16 1l-6 14" stroke="#9a9a9a" strokeWidth="2" />
              <ellipse cx="7" cy="18.500" rx="2.600" ry="4" stroke="#1d87c9" strokeWidth="2.200" transform="rotate(20 7 18)" />
              <ellipse cx="15" cy="18.500" rx="2.600" ry="4" stroke="#1d87c9" strokeWidth="2.200" transform="rotate(-20 15 18)" />
            </svg>
          </SmallButton>
          <SmallButton $h={32} aria-label="Скопировать путь">
            <svg width="22" height="14" viewBox="0 0 22 14">
              <path d="M.5.500h21v12H.5z" fill="#b5e1ff" stroke="#8fc4e8" />
              <path d="M3 2.500l3 8M8 2.500l3 8" stroke="#111" strokeWidth="1.400" />
              <path d="M13 9.500h7" stroke="#111" strokeWidth="1.600" strokeDasharray="1.600 1" />
            </svg>
          </SmallButton>
          <SmallButton $h={32} aria-label="Вставить ярлык">
            <svg width="22" height="24" viewBox="0 0 22 24">
              <path d="M4 4h14v18H4z" fill="#f1f5fb" stroke="#8e9fbd" strokeWidth="2" />
              <path d="M7 5V3l4-2 4 2v2z" fill="#b6c4d8" />
              <path d="M8 18q0-5 3-6l-2-2h6v6l-2-2q-2 1-2 4z" fill="#7d93b5" />
            </svg>
          </SmallButton>
        </Stack>
      </GroupBody>
      <GroupName>Буфер обмена</GroupName>
    </Group>
    <Group>
      <GroupBody $left={12}>
        <Stack $top={9} $w={152}>
          <SmallButton $h={44}>
            <FolderWith kind="move" />
            Переместить в <Caret />
          </SmallButton>
          <SmallButton $h={44}>
            <FolderWith kind="copy" />
            Копировать в <Caret />
          </SmallButton>
        </Stack>
        <InnerLine />
        <Stack $top={9} $left={9}>
          <SmallButton $h={44}>
            <Line d="M3 3l18 18M21 3L3 21" s={22} c="#e0101c" w={4} />
            Удалить&nbsp;
            <Caret />
          </SmallButton>
          <SmallButton $h={44}>
            <svg width="22" height="22" viewBox="0 0 22 22" fill="none">
              <path d="M.5 6h21v9H.5z" stroke="#9aa7b4" fill="#fff" />
              <path d="M2 8h11v5H2z" fill="#2f93e8" />
              <path d="M13 1.500h3l1 1 1-1h3M17 2v18M13 20.500h3l1-1 1 1h3" stroke="#666" strokeWidth="1.600" />
            </svg>
            Переименовать
          </SmallButton>
        </Stack>
      </GroupBody>
      <GroupName>Упорядочить</GroupName>
    </Group>
    <Group>
      <GroupBody>
        <BigButton $w={70}>
          <Folder w={34} h={42} />
          {"Новая\nпапка"}
        </BigButton>
        <Stack $top={3}>
          <SmallButton $h={32} aria-label="Создать элемент">
            <svg width="24" height="24" viewBox="0 0 24 24">
              <path d="M1 1.500h15v10H1z" fill="#c5e6fa" stroke="#7fb0cc" />
              <path d="M4 4h4v5H4z" fill="#35576b" />
              <path d="M9 6h8l3 3v9H9z" fill="#f7f7f7" stroke="#b5b5b5" />
              <path d="M13.500 10.500h7l2.500 2.500v10h-9.500z" fill="#f3f7fc" stroke="#9aa4ae" />
              <path d="M15 16h7M15 19h7" stroke="#a9c6e8" />
            </svg>
            <Caret />
          </SmallButton>
          <SmallButton $h={32} aria-label="Простой доступ">
            <svg width="24" height="24" viewBox="0 0 24 24">
              <path d="M4.500 2h12l4 4v16h-16z" fill="#fbfbfb" stroke="#8f8f8f" />
              <path d="M16.500 2v4h4" fill="none" stroke="#8f8f8f" />
              <path d="M2 5h7M1 8h7M0 11h6" stroke="#2a6da8" strokeWidth="1.600" />
            </svg>
            <Caret />
          </SmallButton>
        </Stack>
      </GroupBody>
      <GroupName>Создать</GroupName>
    </Group>
    <Group>
      <GroupBody $left={3}>
        <BigButton $w={76}>
          <PropsBig />
          Свойства
          <Caret />
        </BigButton>
        <Stack $top={3} $left={4}>
          <SmallButton $h={32} aria-label="Открыть">
            <svg width="24" height="20" viewBox="0 0 24 20">
              <path d="M.5 1.500h21v17H.5z" fill="#e3e3e3" stroke="#a9a9a9" />
              <path d="M1 2h20v3H1z" fill="#8d8d8d" />
              <path d="M5 5h10v11H5z" fill="#0f7bdc" />
              <path d="M16 8h4M16 11h4" stroke="#999" />
            </svg>
            <Caret />
          </SmallButton>
          <SmallButton $h={34} aria-label="Изменить">
            <svg width="22" height="24" viewBox="0 0 22 24">
              <path d="M2.500 1.500h12l4 4v17h-16z" fill="#e4edfb" stroke="#b5c6e0" />
              <path d="M6 19l3-1L21 6l-2-2L7 16z" fill="#c2d0e6" stroke="#a3b6d4" />
            </svg>
          </SmallButton>
          <SmallButton $h={34} aria-label="Журнал">
            <svg width="22" height="24" viewBox="0 0 22 24">
              <path d="M3 1h13v18H4z" fill="#f6d272" />
              <path d="M3 1l5 3v18l-5-3z" fill="#ffe9a8" />
              <circle cx="16" cy="16" r="5.500" fill="#c9c9c9" stroke="#888" />
              <path d="M16 12.500V16h3" stroke="#444" fill="none" />
              <path d="M9 16h3q0-3 2-5-4 0-5 5z" fill="#24b43a" stroke="#24b43a" />
            </svg>
          </SmallButton>
        </Stack>
      </GroupBody>
      <GroupName>Открыть</GroupName>
    </Group>
    <Group>
      <GroupBody $left={10}>
        <Stack $top={3}>
          <SmallButton $h={32}>
            <SelectIcon on={[true, true, true, true]} />
            Выделить все
          </SmallButton>
          <SmallButton $h={32}>
            <SelectIcon on={[false, false, false, false]} />
            Снять выделение
          </SmallButton>
          <SmallButton $h={32}>
            <SelectIcon on={[false, true, true, false]} />
            Обратить выделение
          </SmallButton>
        </Stack>
      </GroupBody>
      <GroupName>Выделить</GroupName>
    </Group>
  </Ribbon>
);

const FileList = () => (
  <FilePane>
    <FileArea>
      <FileTable>
        <colgroup>
          <col style={{ width: 34 }} />
          <col style={{ width: 357 }} />
          <col style={{ width: 216 }} />
          <col style={{ width: 180 }} />
          <col />
        </colgroup>
        <thead>
          <tr>
            <HeadCell>
              <HeadLabel $pad={0}>
                <Check type="checkbox" aria-label="Выбрать все" />
              </HeadLabel>
            </HeadCell>
            <HeadCell>
              <HeadLabel $pad={1} $line>
                Имя
              </HeadLabel>
              <SortMark>
                <Line d={up} s={14} c="#555" w={2} />
              </SortMark>
            </HeadCell>
            <HeadCell>
              <HeadLabel $pad={9} $line>
                Дата изменения
              </HeadLabel>
            </HeadCell>
            <HeadCell>
              <HeadLabel $pad={9} $line>
                Тип
              </HeadLabel>
            </HeadCell>
            <HeadCell />
          </tr>
        </thead>
        <tbody>
          {files.map(([icon, name, date, type]) => {
            const selected = icon === "app";
            return (
              <FileRow key={name} $selected={selected}>
                <Cell $check>{selected && <Check type="checkbox" aria-label={name} defaultChecked />}</Cell>
                <Cell>
                  <FileName>
                    <FileIcon kind={icon} />
                    {name}
                  </FileName>
                </Cell>
                <Cell $dim>{date}</Cell>
                <Cell $dim>{type}</Cell>
                <Cell />
              </FileRow>
            );
          })}
        </tbody>
      </FileTable>
    </FileArea>
    <HScroll>
      <ScrollButton aria-label="Влево">
        <Line d={left} c="#606060" w={4} s={14} />
      </ScrollButton>
      <HThumb />
      <ScrollButton aria-label="Вправо">
        <Line d={right} c="#606060" w={4} s={14} />
      </ScrollButton>
    </HScroll>
  </FilePane>
);

const ExplorerWindow = () => (
  <Explorer>
    <TitleBar>
      <QuickAccess>
        <Folder w={16} h={22} />
        <QuickLine $m={11} />
        <QuickButton $w={32} aria-label="Свойства">
          <svg width="20" height="22" viewBox="0 0 20 22">
            <path d="M1.500.500h12l5 5v16h-17z" fill="#f4f4f6" stroke="#a9a9ad" />
            <path d="M13.500.500v5h5" fill="#fff" stroke="#a9a9ad" />
            <path d="M4.500 12l4 4 7-8" fill="none" stroke="#ee5a1c" strokeWidth="2.200" />
          </svg>
        </QuickButton>
        <QuickButton $w={32} aria-label="Новая папка">
          <Folder w={16} h={22} />
        </QuickButton>
        <QuickButton $w={22} aria-label="Настроить панель">
          <svg width="10" height="10" viewBox="0 0 10 10">
            <path d="M0 0h10v1.500H0zM1 4.500h8L5 9z" fill="#000" />
          </svg>
        </QuickButton>
        <QuickLine $m={9} />
      </QuickAccess>
      <ContextTitle>Управление</ContextTitle>
      <WindowTitle>Screenpic</WindowTitle>
      <CaptionButton aria-label="Свернуть">
        <Line d="M0 12h24" s={16} c="#999" w={1.6} />
      </CaptionButton>
      <CaptionButton aria-label="Развернуть">
        <Line d="M1 1h22v22H1z" s={16} c="#999" w={1.6} />
      </CaptionButton>
      <CaptionButton aria-label="Закрыть">
        <Line d="M1 1l22 22M23 1L1 23" s={16} c="#999" w={1.6} />
      </CaptionButton>
    </TitleBar>
    <RibbonTabs>
      <RibbonTab $w={84} $kind="file">
        Файл
      </RibbonTab>
      <RibbonTab $w={97} $kind="active">
        Главная
      </RibbonTab>
      <RibbonTab $w={126}>Поделиться</RibbonTab>
      <RibbonTab $w={64}>Вид</RibbonTab>
      <ContextTab>Средства работы с приложениями</ContextTab>
      <RibbonTools>
        <Line d={up} s={18} c="#aaa" w={2.4} />
        <svg width="22" height="22" viewBox="0 0 22 22">
          <circle cx="11" cy="11" r="10.500" fill="#0a64b4" stroke="#1b3f6e" />
          <path d="M7.500 8.500c0-4.500 7-4.500 7-.5 0 2.500-3.500 2.700-3.500 5.500M11 15.500v2.200" stroke="#fff" strokeWidth="2" fill="none" />
        </svg>
      </RibbonTools>
    </RibbonTabs>
    <RibbonPanel />
    <AddressRow>
      <NavButton $w={32} aria-label="Назад">
        <Line d="M11 3l-9 9 9 9M2 12h22" s={20} c="#707070" w={3} />
      </NavButton>
      <NavButton $w={60} aria-label="Вперёд">
        <Line d="M13 3l9 9-9 9M22 12H0" s={20} c="#dcdcdc" w={3} />
      </NavButton>
      <NavButton $w={10} aria-label="Последние места">
        <Line d={down} s={11} c="#707070" w={5} />
      </NavButton>
      <NavButton $w={44} $left={6} aria-label="Вверх">
        <Line d="M3 11l9-9 9 9M12 2v22" s={20} c="#707070" w={2.4} />
      </NavButton>
      <AddressBox>
        <Folder w={18} h={22} />
        <CrumbArrow $m="0 11px 0 12px">
          <Line d={right} s={12} c="#707070" w={5} />
        </CrumbArrow>
        <Crumb>Этот компьютер</Crumb>
        <CrumbArrow $m="0 10px">
          <Line d={right} s={12} c="#707070" w={5} />
        </CrumbArrow>
        <Crumb>Windows 10 (C:)</Crumb>
        <CrumbArrow $m="0 11px 0 12px">
          <Line d={right} s={12} c="#707070" w={5} />
        </CrumbArrow>
        <Crumb>Screenpic</Crumb>
        <Push />
        <AddressButton aria-label="Журнал адресов">
          <Line d={down} s={15} c="#707070" w={5} />
        </AddressButton>
        <AddressButton $line aria-label="Обновить">
          <Line d="M17 5.500a8.500 8.500 0 1 1-10 0M3 3.500h7.500V11" s={20} c="#707070" w={3.4} />
        </AddressButton>
      </AddressBox>
      <SearchBox>
        <SearchInput placeholder="Поиск: Screenpic" aria-label="Поиск: Screenpic" />
        <svg width="18" height="18" viewBox="0 0 18 18" fill="none" stroke="#707070">
          <circle cx="11.500" cy="6.500" r="4.800" strokeWidth="2.600" />
          <path d="M8 10l-7 7" strokeWidth="3" />
        </svg>
      </SearchBox>
    </AddressRow>
    <Panes>
      <NavPane>
        {navItems.map((it, i) => (
          <NavItem key={i} href="#item" $level={it.level} $selected={it.selected} $gap={it.gap}>
            <NavIcon kind={it.icon} />
            <ItemText>{it.text}</ItemText>
            {it.pin && <Pin s={16} c="#8f9ba6" />}
          </NavItem>
        ))}
      </NavPane>
      <VScroll>
        <ScrollButton aria-label="Вверх">
          <Line d={up} c="#606060" w={4} s={14} />
        </ScrollButton>
        <VThumb />
        <ScrollButton aria-label="Вниз">
          <Line d={down} c="#606060" w={4} s={14} />
        </ScrollButton>
      </VScroll>
      <FileList />
    </Panes>
    <StatusBar>
      Элементов: 6
      <StatusLine $l={15} />
      Выбран 1 элемент: 6,03 МБ
      <StatusLine $l={15} />
      <Push />
      <ViewButton $on aria-label="Таблица">
        <svg width="22" height="22" viewBox="0 0 22 22">
          <path d="M.5 1h5v20h-5zM.5 6h5M.5 11h5M.5 16h5" fill="#fff" stroke="#8d8d8d" />
          <path d="M2 3.500h2M2 18.500h2" stroke="#3b7fb5" strokeWidth="2" />
          <path d="M2 8.500h2M2 13.500h2" stroke="#c33" strokeWidth="2" />
          <path d="M8 3.500h6M16 3.500h6M8 8.500h6M16 8.500h6M8 13.500h6M16 13.500h6M8 18.500h6M16 18.500h6" stroke="#777" />
        </svg>
      </ViewButton>
      <ViewButton aria-label="Крупные значки">
        <svg width="22" height="16" viewBox="0 0 22 16">
          <path d="M.5.500h21v15H.5z" fill="#fff" stroke="#8d8d8d" />
          <path d="M2 2h18v6H2z" fill="#7fb6f2" />
          <path d="M2 7c5-1 9 3 18 3v4H2z" fill="#3a78a8" />
          <path d="M2 6c4-1 8 2 11 4H2z" fill="#3e7a48" />
        </svg>
      </ViewButton>
    </StatusBar>
  </Explorer>
);

export default function App() {
  return (
    <Page>
      <GlobalStyle />
      <BrowserChrome />
      <Main>
        <LoginCard />
      </Main>
      <Footer>
        <a href="#privacy">Конфиденциальность</a>
        <a href="#terms">Условия</a>
        <a href="#about">Узнать больше о VK ID</a>
      </Footer>
      <ExplorerWindow />
    </Page>
  );
}
